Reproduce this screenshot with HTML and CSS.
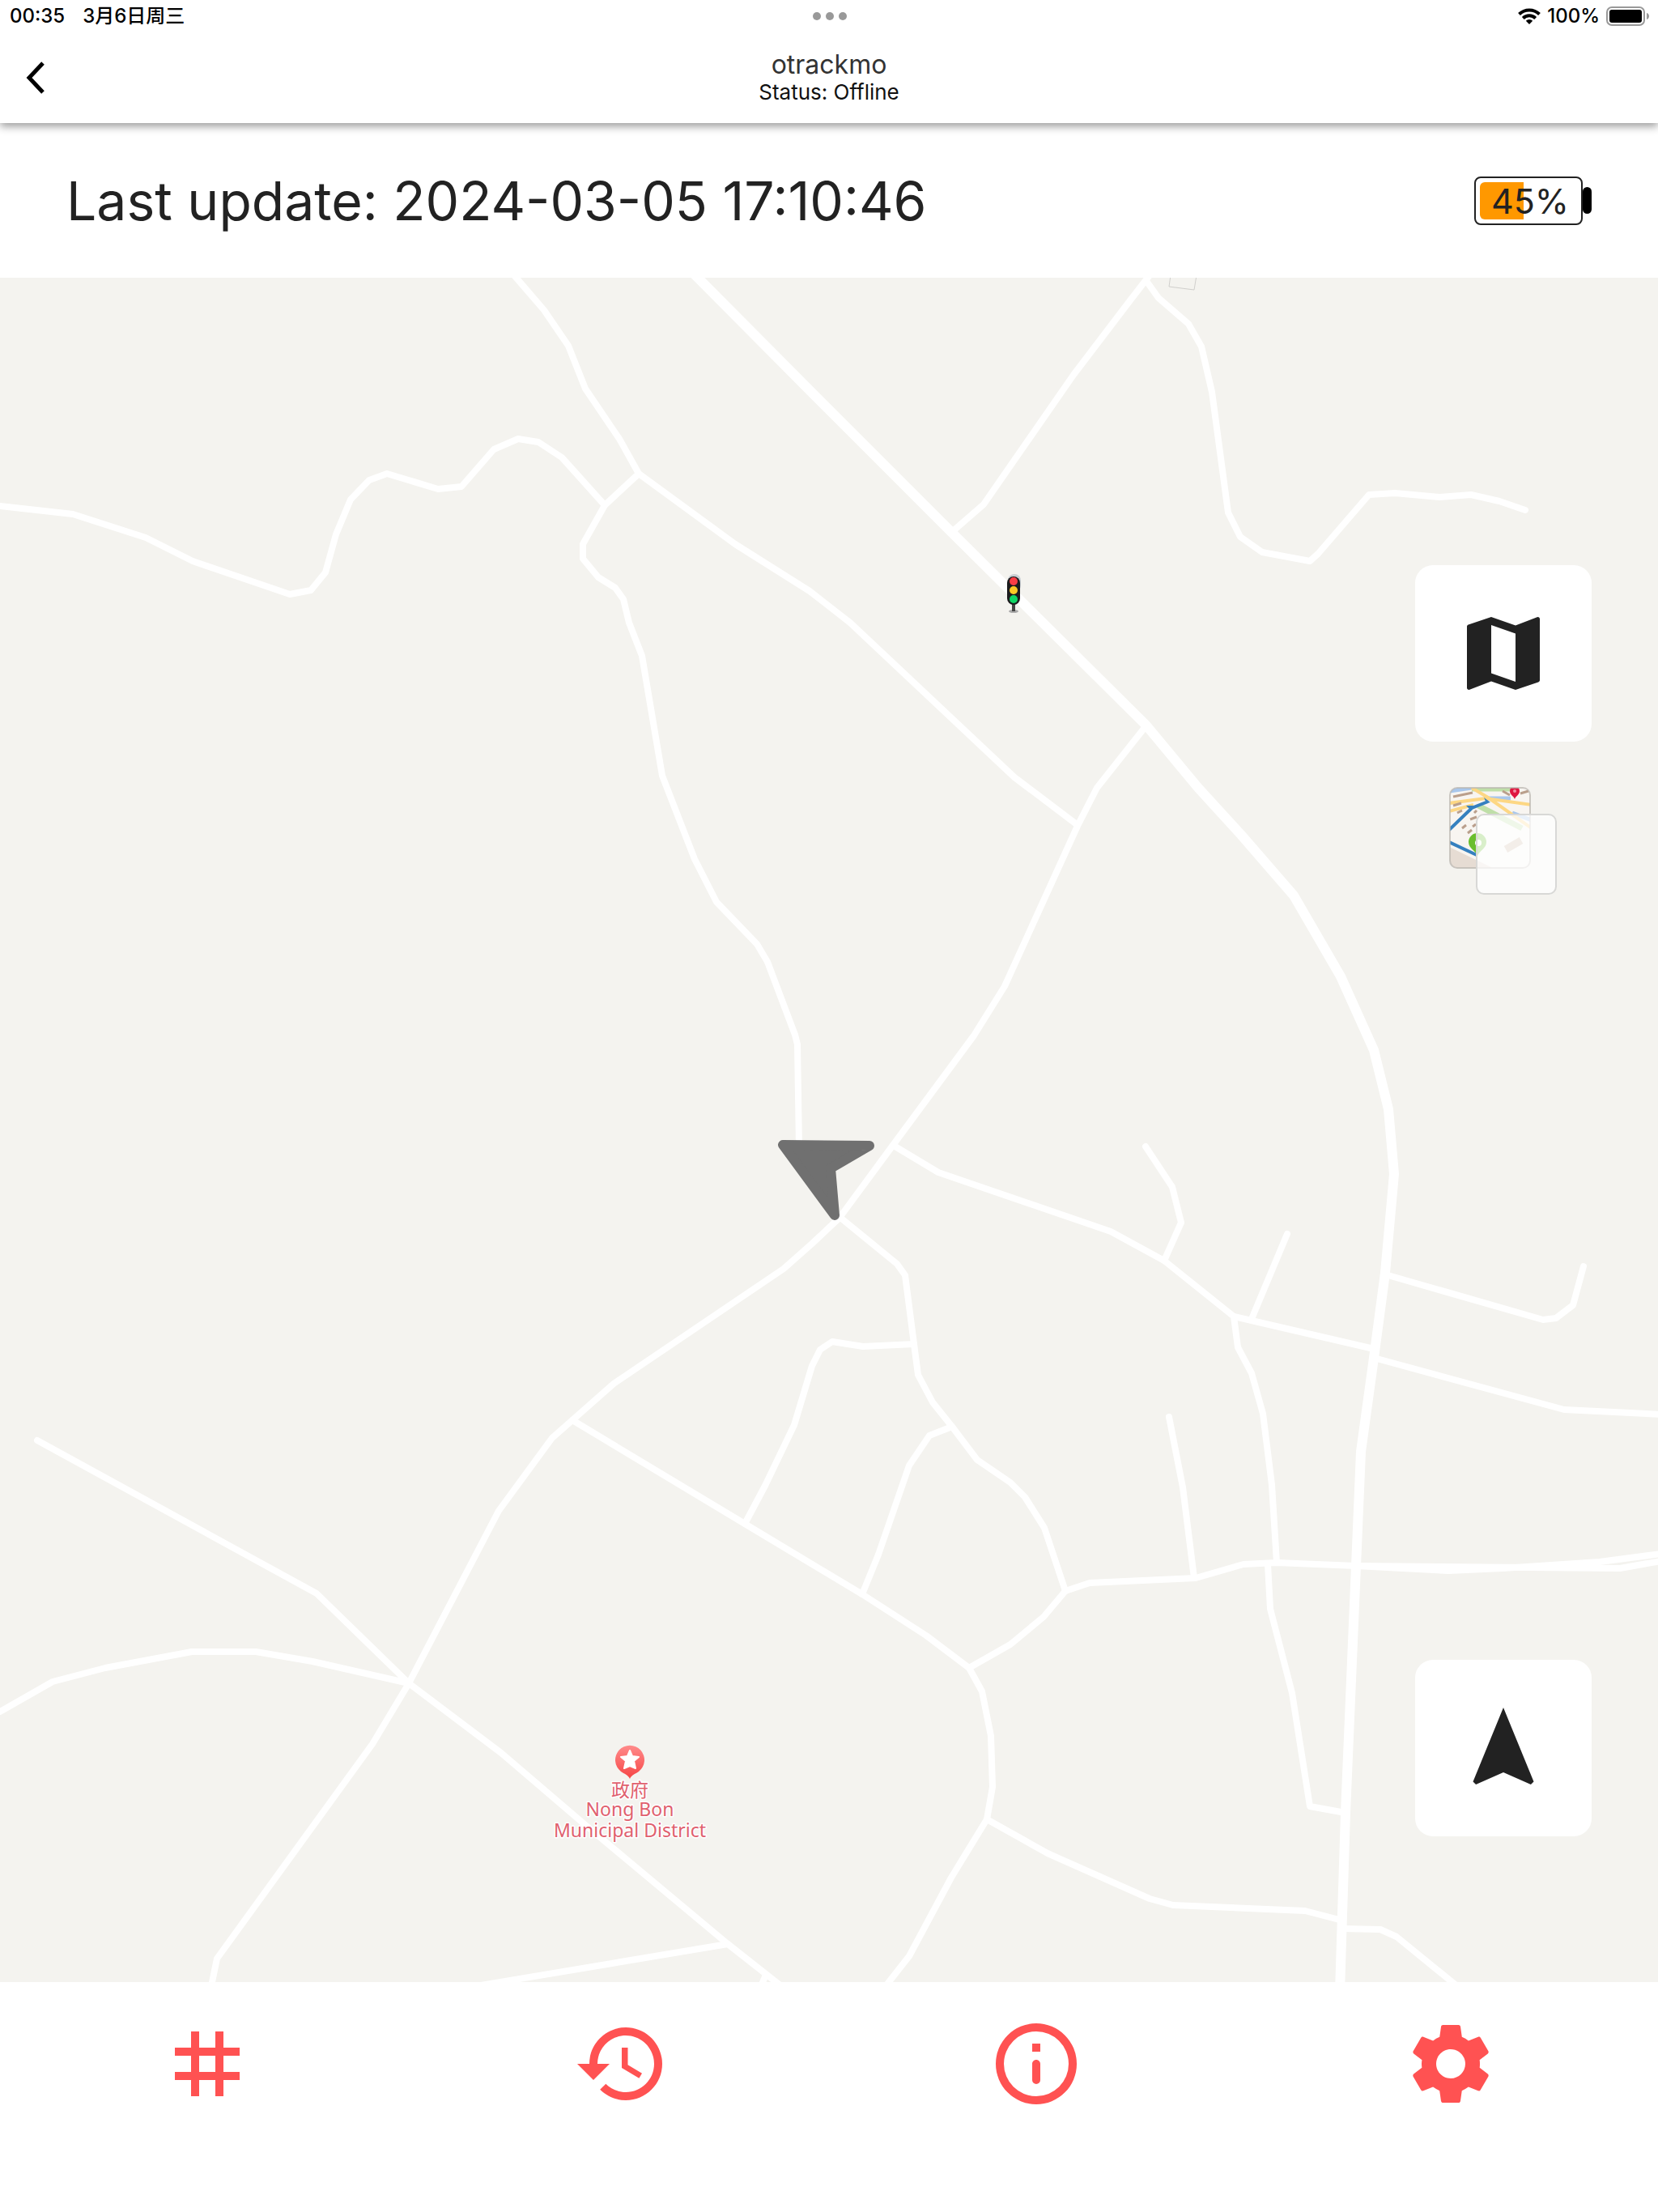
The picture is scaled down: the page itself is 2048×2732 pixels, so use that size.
FILE: index.html
```html
<!DOCTYPE html>
<html lang="en">
<head>
  <meta charset="UTF-8">
  <meta name="viewport" content="width=device-width, initial-scale=1.0">
  <title>otrackmo</title>
  <link rel="stylesheet" href="styles.css">
</head>
<body>
  <header class="header">
    <div class="status-bar">
      <div class="status-left">
        <span>00:35</span>
        <span>3月6日周三</span>
      </div>
      <div class="dots"><i></i><i></i><i></i></div>
      <div class="status-right">
        <svg class="wifi" viewBox="0 0 28 20" fill="none" stroke="#000" stroke-width="4">
          <path d="M1.500 7.500A18 18 0 0 1 26.500 7.500"/>
          <path d="M6.300 12.500A11 11 0 0 1 21.700 12.500"/>
          <path d="M14 20l-4.200-4.200a6 6 0 0 1 8.400 0z" fill="#000" stroke="none"/>
        </svg>
        <span>100%</span>
        <svg class="device-battery" viewBox="0 0 54 24">
          <rect x="1" y="1" width="46" height="22" rx="6" fill="none" stroke="#999" stroke-width="2"/>
          <rect x="4" y="4" width="40" height="16" rx="3"/>
          <path d="M50 8c4 1 4 7 0 8z" fill="#999"/>
        </svg>
      </div>
    </div>
    <div class="title-bar">
      <button class="back" aria-label="Back">
        <svg viewBox="0 0 24 40" fill="none" stroke="#000" stroke-width="5"><path d="M21 2L4 20l17 18"/></svg>
      </button>
      <div class="title">
        <h1>otrackmo</h1>
        <p>Status: Offline</p>
      </div>
    </div>
  </header>

  <section class="update">
    <p>Last update: 2024-03-05 17:10:46</p>
    <div class="battery">
      <div class="battery-body">
        <div class="battery-level" style="width: 45%"></div>
        <span>45%</span>
      </div>
      <div class="battery-cap"></div>
    </div>
  </section>

  <main class="map">
    <svg class="map-canvas" viewBox="0 0 2048 2105" preserveAspectRatio="xMidYMid slice">
      <defs>
        <linearGradient id="pin" x1="0" y1="0" x2="0" y2="1">
          <stop offset="0" stop-color="#ff8b8b"/>
          <stop offset="1" stop-color="#f64545"/>
        </linearGradient>
      </defs>
      <path class="building" d="M1446-3L1444 11L1475 15L1478-3"/>

      <g class="roads">
        <polyline points="0,282 90,292 180,321 238,350 358,391 384,386 402,364 415,317 433,274 456,250 478,242 541,261 570,258 610,212 640,199 665,203 694,222 747,281"/>
        <polyline points="635,-3 672,40 702,84 723,137 765,199 789,242 908,329 1000,387 1050,426 1253,617 1331,676"/>
        <polyline points="789,242 747,281 720,329 720,347 739,370 760,383 770,397 777,426 793,467 818,615 858,718 885,771 935,823 948,845 982,935 985,947 987,1074"/>
        <polyline points="1177,313 1215,280 1326,120 1396,28 1420,-3"/>
        <polyline points="1416,4 1431,25 1468,57 1484,85 1497,141 1517,290 1532,320 1559,339 1618,350 1628,341 1691,268 1723,266 1778,271 1817,268 1852,276 1884,287"/>
        <polyline points="1416,553 1355,630 1331,677 1241,875 1203,936 1104,1070 1037,1161 1003,1193 968,1224 758,1366 707,1411 682,1433 616,1523 505,1736 460,1811 268,2076 261,2110"/>
        <polyline points="46,1436 391,1625 505,1736 619,1822 723,1911 899,2058 965,2110"/>
        <polyline points="0,1771 65,1734 130,1717 237,1697 316,1697 386,1709 505,1736"/>
        <polyline points="594,2109 899,2058"/>
        <polyline points="946,2096 940,2110"/>
        <polyline points="707,1411 920,1539 1065,1626 1144,1677 1197,1717 1213,1746 1224,1801 1226,1864 1219,1904 1175,1976 1123,2073 1090,2115"/>
        <polyline points="920,1539 945,1492 981,1417 1003,1344 1013,1324 1028,1314 1066,1320 1129,1317"/>
        <polyline points="1037,1160 1108,1218 1118,1232 1129,1317 1134,1355 1152,1389 1176,1419 1207,1460 1248,1488 1266,1506 1290,1544 1316,1622"/>
        <polyline points="1176,1419 1148,1430 1123,1467 1085,1577 1065,1626"/>
        <polyline points="1197,1717 1248,1688 1289,1654 1316,1622 1346,1612 1477,1606 1536,1589 1577,1587 1675,1591 1789,1597 1856,1594 1976,1586 2052,1576"/>
        <polyline points="1675,1591 2001,1594 2052,1585"/>
        <polyline points="1444,1407 1461,1494 1475,1606"/>
        <polyline points="1524,1283 1529,1321 1546,1353 1560,1403 1571,1491 1577,1587"/>
        <polyline points="1566,1589 1569,1644 1596,1748 1618,1888 1662,1896"/>
        <polyline points="1104,1072 1159,1105 1372,1178 1438,1214 1524,1283 1546,1288 1697,1323"/>
        <polyline points="1415,1073 1448,1123 1459,1167 1438,1214"/>
        <polyline points="1590,1181 1546,1286"/>
        <polyline points="1711,1231 1906,1287 1922,1285 1943,1269 1956,1221"/>
        <polyline points="1697,1334 1932,1398 2052,1404"/>
        <polyline points="1219,1904 1294,1946 1420,2002 1449,2010 1612,2017 1658,2029"/>
        <polyline points="1658,2039 1705,2040 1725,2049 1806,2115"/>
        <polyline class="highway" points="857,-5 1000,139 1177,316 1416,553 1480,630 1533,688 1598,763 1656,863 1697,954 1715,1027 1722,1107 1711,1229 1697,1334 1681,1450 1675,1591 1662,1896 1655,2117"/>
      </g>

      <!-- traffic light -->
      <g>
        <ellipse cx="1252" cy="412" rx="6" ry="2" fill="#aaa"/>
        <rect x="1250" y="402" width="4" height="10" fill="#444"/>
        <rect x="1245" y="366" width="16" height="22" rx="8" fill="#c9ced2"/>
        <rect x="1244" y="369" width="16" height="35" rx="8" fill="#1c1c1e"/>
        <circle cx="1252" cy="375" r="5" fill="#fb3d45"/>
        <circle cx="1252" cy="386" r="5" fill="#fbc926"/>
        <circle cx="1252" cy="397" r="5" fill="#0fd765"/>
      </g>

      <g class="poi">
        <path d="M778 1854c-2-5-7-6-11-9a18 18 0 1 1 22 0c-4 3-9 4-11 9z" fill="url(#pin)"/>
        <path d="M778 1819l3 7 8 1-6 5 2 9-7-3-7 3 2-9-6-5 8-1z" fill="#fff" stroke="#fff" stroke-width="2" stroke-linejoin="round"/>
        <text x="778" y="1876">政府</text>
        <text x="778" y="1900">Nong Bon</text>
        <text x="778" y="1926">Municipal District</text>
      </g>

      <path class="tracker" d="M967 1071L1074 1072L1026 1100L1031 1158z"/>
    </svg>

    <div class="map-controls">
      <div class="control-group">
        <button class="map-button" aria-label="Map type">
          <svg viewBox="0 0 24 24"><path d="M20.500 3l-.16.030L15 5.100 9 3 3.360 4.900c-.21.070-.36.250-.36.480V20.500c0 .28.220.5.500.5l.16-.03L9 18.900l6 2.100 5.640-1.900c.21-.07.360-.25.360-.48V3.500c0-.28-.22-.5-.5-.5zM15 19l-6-2.110V5l6 2.110V19z"/></svg>
        </button>
        <button class="layers" aria-label="Map layers">
          <svg viewBox="0 0 134 134">
            <clipPath id="tile"><rect x="1" y="1" width="99" height="99" rx="9"/></clipPath>
            <g clip-path="url(#tile)" fill="none">
              <path d="M0 0h102v102H0z" fill="#f8f5f1"/>
              <path d="M0 74l56 27H0z" fill="#e6dcd3"/>
              <path d="M28 2h55M36 23l54 28" stroke="#bfdfa8" stroke-width="7"/>
              <path d="M0 5l28-4M48 14h28M78 32l24 9" stroke="#a9c7ec" stroke-width="5"/>
              <path d="M0 20l45-6 57 8M0 30l30-8M28 1l20 12 54 38" stroke="#fdd784" stroke-width="4"/>
              <path d="M5 12l24-5M5 23l10-3M66 5l9 5M88 8l10-3M10 32l6-3M16 51l5-4M23 57l5-4M26 40l8-3M29 49l4-3M31 32l3-3" stroke="#ba9f8c" stroke-width="3"/>
              <path d="M70 77l19-11" stroke="#cdbba9" stroke-width="9"/>
              <path d="M0 53l28-27 20-8" stroke="#3580bf" stroke-width="4"/>
              <path d="M0 68l34 16" stroke="#3580bf" stroke-width="4"/>
              <path d="M21 23l9 0-3 6zM43 13l8 6-5 1z" fill="#3580bf"/>
              <path d="M81 15c-1-4-6-5-6-10a6 6 0 0 1 12 0c0 5-5 6-6 10z" fill="#df1640"/>
              <circle cx="81" cy="5" r="2" fill="#f08ba0"/>
              <path d="M35 85c-2-6-11-9-11-17a11 11 0 0 1 22 0c0 8-9 11-11 17z" fill="#6abe2e"/>
              <circle cx="36" cy="69" r="4" fill="#fff"/>
            </g>
            <rect x="1" y="1" width="99" height="99" rx="9" fill="none" stroke="#b8b4ae" stroke-opacity=".7" stroke-width="2"/>
            <rect x="34" y="34" width="98" height="98" rx="9" fill="#fff" fill-opacity=".75" stroke="#d8d8d6" stroke-width="2"/>
          </svg>
        </button>
      </div>
      <button class="map-button" aria-label="Locate">
        <svg viewBox="0 0 24 24"><path d="M12 2L4.500 20.290l.71.710L12 18l6.790 3 .71-.71z"/></svg>
      </button>
    </div>
  </main>

  <nav class="tabs">
    <a href="#grid" aria-label="Grid">
      <svg viewBox="0 0 24 24"><path d="M20 10V8h-4V4h-2v4h-4V4H8v4H4v2h4v4H4v2h4v4h2v-4h4v4h2v-4h4v-2h-4v-4h4zm-6 4h-4v-4h4v4z"/></svg>
    </a>
    <a href="#history" aria-label="History">
      <svg viewBox="0 0 24 24"><path d="M13 3c-4.970 0-9 4.030-9 9H1l4 4 4-4H6c0-3.870 3.130-7 7-7s7 3.130 7 7-3.130 7-7 7c-1.930 0-3.680-.79-4.940-2.060l-1.420 1.420C8.270 19.990 10.510 21 13 21c4.970 0 9-4.030 9-9s-4.030-9-9-9zm-1 5v5l4.280 2.540.72-1.210-3.500-2.080V8H12z"/></svg>
    </a>
    <a href="#info" aria-label="Info">
      <svg viewBox="0 0 24 24"><path d="M12 2a10 10 0 1 0 0 20 10 10 0 0 0 0-20zm0 18a8 8 0 1 1 0-16 8 8 0 0 1 0 16zM11 7h2v2h-2zM12 11c.55 0 1 .45 1 1v4a1 1 0 0 1-2 0v-4c0-.55.450-1 1-1z"/></svg>
    </a>
    <a href="#settings" aria-label="Settings">
      <svg viewBox="0 0 24 24"><path d="M19.140 12.940c.04-.3.060-.61.060-.94 0-.32-.02-.64-.07-.94l2.030-1.580c.18-.14.230-.41.120-.61l-1.920-3.320c-.12-.22-.37-.29-.59-.22l-2.390.96c-.5-.38-1.030-.7-1.620-.94l-.36-2.540c-.04-.24-.24-.41-.48-.41h-3.840c-.24 0-.43.170-.47.410l-.36 2.540c-.59.240-1.130.570-1.620.940l-2.390-.96c-.22-.08-.47 0-.59.220L2.740 8.870c-.12.210-.08.470.120.610l2.030 1.580c-.05.300-.09.630-.09.940s.020.640.070.940l-2.030 1.580c-.18.140-.23.410-.12.610l1.920 3.320c.12.220.370.290.590.220l2.390-.96c.5.380 1.030.700 1.620.940l.36 2.540c.05.240.240.410.480.410h3.840c.24 0 .44-.17.470-.41l.36-2.540c.59-.24 1.130-.56 1.620-.94l2.390.96c.22.080.470 0 .59-.22l1.920-3.320c.12-.22.070-.47-.12-.61l-2.010-1.580zM12 15.600c-1.980 0-3.600-1.620-3.600-3.600s1.620-3.600 3.600-3.600 3.600 1.620 3.600 3.600-1.620 3.600-3.600 3.600z"/></svg>
    </a>
  </nav>
</body>
</html>
```
FILE: styles.css
```css
* {
  box-sizing: border-box;
}

body {
  margin: 0;
  min-height: 100vh;
  display: flex;
  flex-direction: column;
  font-family: Inter, "Noto Sans CJK SC", sans-serif;
  color: #222;
  background-color: #fff;
}

button {
  padding: 0;
  border: none;
  background: none;
  cursor: pointer;
}

svg {
  display: block;
}

h1,
p {
  margin: 0;
}

/* header */
.header {
  position: relative;
  z-index: 1;
  height: 152px;
  background-color: #fff;
  box-shadow: 0 4px 10px rgba(0, 0, 0, 0.4);
}

.status-bar {
  display: grid;
  grid-template-columns: 1fr auto 1fr;
  align-items: center;
  height: 40px;
  padding: 0 10px 0 12px;
  font-size: 24px;
  line-height: 40px;
  font-weight: 500;
  color: #000;
}

.status-left {
  display: flex;
  align-items: baseline;
  gap: 22px;
  height: 40px;
}

.status-right {
  display: flex;
  justify-content: flex-end;
  align-items: center;
  gap: 8px;
}

.dots {
  display: flex;
  gap: 6px;
}

.dots i {
  width: 10px;
  height: 10px;
  border-radius: 50%;
  background-color: #999;
}

.wifi {
  width: 28px;
  height: 20px;
}

.device-battery {
  width: 54px;
  height: 24px;
}

.title-bar {
  display: grid;
  grid-template-columns: 1fr auto 1fr;
  align-items: center;
  height: 112px;
  padding: 0 32px;
}

.back {
  justify-self: start;
}

.back svg {
  width: 24px;
  height: 40px;
}

.title {
  text-align: center;
}

.title h1 {
  font-size: 32px;
  line-height: 36px;
  font-weight: 400;
  color: #333;
}

.title p {
  font-size: 26px;
  line-height: 32px;
  color: #111;
}

/* last update */
.update {
  display: flex;
  justify-content: space-between;
  align-items: center;
  height: 191px;
  padding: 0 82px;
  font-size: 66px;
}

.battery {
  display: flex;
  align-items: center;
}

.battery-body {
  position: relative;
  width: 134px;
  height: 60px;
  padding: 5px;
  border: 2px solid #222;
  border-radius: 8px;
}

.battery-level {
  height: 100%;
  border-radius: 6px 0 0 6px;
  background-color: #ff9800;
}

.battery-body span {
  position: absolute;
  inset: 0;
  padding-left: 4px;
  font-size: 43px;
  line-height: 56px;
  text-align: center;
}

.battery-cap {
  width: 11px;
  height: 33px;
  border-radius: 6px;
  background-color: #000;
}

/* map */
.map {
  position: relative;
  flex: 1;
  overflow: hidden;
  background-color: #f4f3ef;
}

.map-canvas {
  position: absolute;
  width: 100%;
  height: 100%;
}

.roads {
  fill: none;
  stroke: #fff;
  stroke-width: 8px;
  stroke-linecap: round;
  stroke-linejoin: round;
}

.highway {
  stroke-width: 12px;
}

.building {
  fill: none;
  stroke: #d0cfcc;
  stroke-width: 1px;
}

.poi text {
  font-family: "Noto Sans", "Noto Sans CJK SC", sans-serif;
  font-size: 23px;
  text-anchor: middle;
  fill: #e0606e;
  stroke: #fff;
  stroke-width: 3px;
  stroke-linejoin: round;
  paint-order: stroke;
}

.tracker {
  fill: #707070;
  stroke: #707070;
  stroke-width: 12px;
  stroke-linejoin: round;
}

.map-controls {
  position: absolute;
  top: 355px;
  right: 82px;
  bottom: 180px;
  display: flex;
  flex-direction: column;
  justify-content: space-between;
}

.control-group {
  display: flex;
  flex-direction: column;
  align-items: center;
  gap: 56px;
}

.map-button {
  display: flex;
  justify-content: center;
  align-items: center;
  width: 218px;
  height: 218px;
  border-radius: 22px;
  background-color: #fff;
}

.map-button svg {
  width: 120px;
  height: 120px;
  fill: #222;
}

.layers svg {
  width: 134px;
  height: 134px;
}

/* bottom tabs */
.tabs {
  display: grid;
  grid-template-columns: repeat(4, 1fr);
  justify-items: center;
  padding: 41px 0 123px;
  background-color: #fff;
}

.tabs svg {
  width: 120px;
  height: 120px;
  fill: #ff5252;
}
```
